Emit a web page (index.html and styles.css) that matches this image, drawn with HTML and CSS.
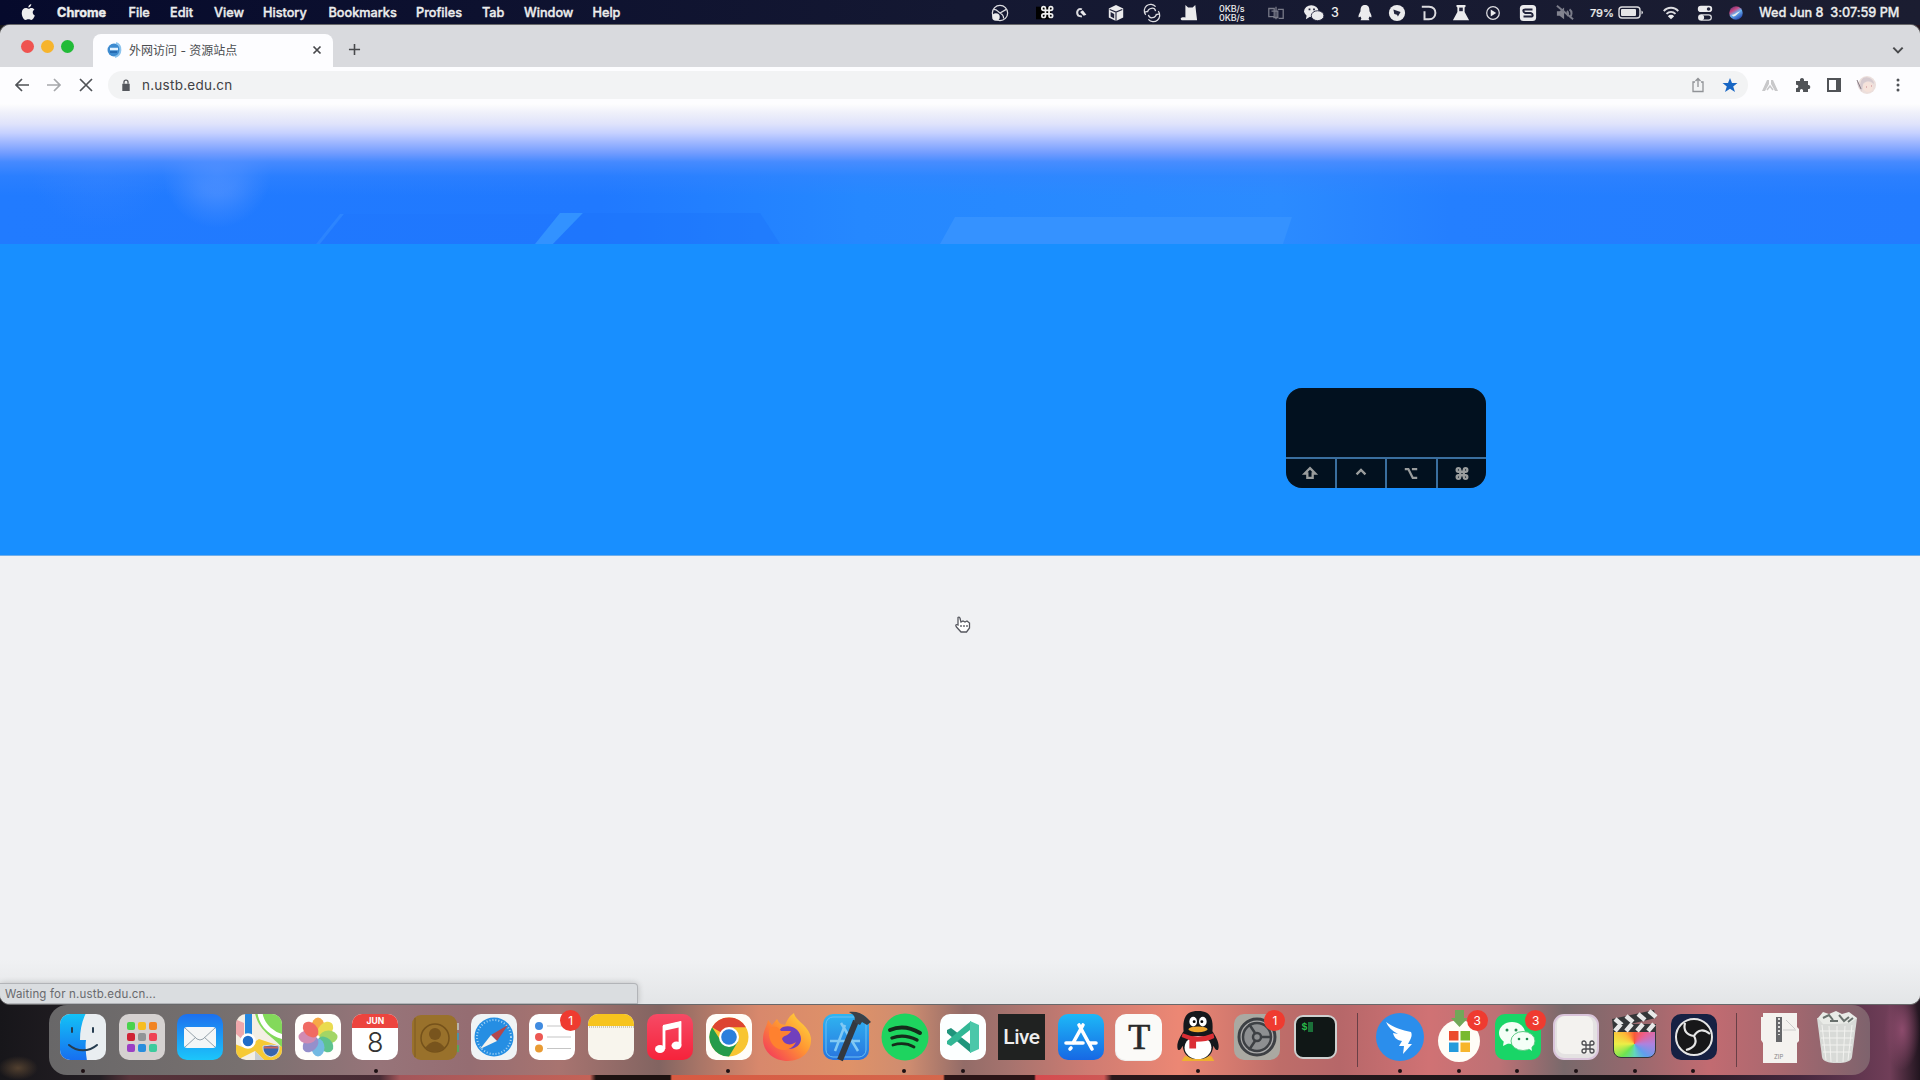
FILE: index.html
```html
<!DOCTYPE html>
<html lang="en">
<head>
<meta charset="utf-8">
<title>外网访问 - 资源站点</title>
<link rel="stylesheet" href="styles.css">
</head>
<body>
<div class="desktop">
  <header class="menubar">
    <nav class="menus">
      <svg class="apple" viewBox="0 0 16 18"><path d="M11 0c.1 2-1.500 3.700-3.200 3.700C7.600 2 9.200.3 11 0zM8 5c.8 0 1.600-.8 3-.8 1.500 0 2.600.7 3.300 1.700-2.600 1.600-2.200 5.200.5 6.300C14 14.500 12.500 17 11 17c-1.200 0-1.600-.7-3-.7s-1.900.7-3 .7C3 17 .8 13 .8 9.500.8 6 3 4.300 5 4.300 6.300 4.300 7.200 5 8 5z"/></svg>
      <b>Chrome</b><span>File</span><span>Edit</span><span>View</span><span>History</span><span>Bookmarks</span><span>Profiles</span><span>Tab</span><span>Window</span><span>Help</span>
    </nav>
    <div class="status">
      <svg class="mi" viewBox="0 0 20 20"><g class="ln"><circle cx="10" cy="10" r="8.500"/><path d="M3 6c4 0 5 3 7 4l7-4M10 10c2 1 4 3 4 6"/></g><circle cx="5.500" cy="14.500" r="4.200"/></svg>
      <svg class="mi" viewBox="0 0 20 20"><path class="black" d="M0 3h17v14H0z"/><path class="cmd" transform="translate(3.500 1)" d="M7 6V4a2 2 0 1 0-2 2h8a2 2 0 1 0-2-2v8a2 2 0 1 0 2-2H5a2 2 0 1 0 2 2z"/></svg>
      <svg class="mi" viewBox="0 0 20 20"><path class="thick" d="M11 6C7 4 4 9 7 13l4 1"/><path d="M9 9l3-2 4 5-3 1-2-2z"/></svg>
      <svg class="mi" viewBox="0 0 20 20"><path d="M10 1l8 4v10l-8 4-8-4V5z"/><path class="navyln" d="M3 6l7 3 7-3M10 9v10"/><path class="navy" d="M4 9l4 2v5l-4-2z"/></svg>
      <svg class="mi" viewBox="0 0 20 20"><path class="ln" d="M3 12A7 7 0 0 1 14 3M17 8A7 7 0 0 1 6 17M5 9c1-5 8-6 9-1M15 11c-1 5-8 6-9 1M14 12l4-1M6 8L2 9"/></svg>
      <svg class="mi" viewBox="0 0 20 20"><path d="M6 1l3 3h5l3-3 1 9 1 8H2c-3-2 0-4 4-3z"/></svg>
      <span class="net">0KB/s<br>0KB/s</span>
      <svg class="mi dim" viewBox="0 0 20 20"><path class="ln" d="M2 5h6v9H2zM12 6h6v10h-5M5 8h7v7H7M10 3v14"/></svg>
      <svg class="mi wide" viewBox="0 0 22 20"><ellipse cx="8" cy="8" rx="8" ry="6.500"/><path d="M3 12l-1 5 5-3z"/><ellipse class="navyedge" cx="15" cy="13" rx="7" ry="5.500"/><path class="navy" d="M5 5h2v2H5zM10 5h2v2h-2z"/></svg>
      <span>3</span>
      <svg class="mi" viewBox="0 0 20 20"><path d="M10 1c4 0 5 3 5 7 1 2 3 5 2 7l-2-1-1 2 1 2H5l1-2-1-2-2 1c-1-2 1-5 2-7 0-4 1-7 5-7z"/></svg>
      <svg class="mi" viewBox="0 0 20 20"><circle cx="10" cy="10" r="9"/><path class="navy" d="M6 6l8 3-3 5-1-2-3-1z"/></svg>
      <svg class="mi" viewBox="0 0 20 20"><path class="thick" d="M2 3h8c10 0 9 14 0 14H5V8"/></svg>
      <svg class="mi" viewBox="0 0 20 20"><path d="M5 1h10v2l-1 1v5l5 9H1l5-9V4L5 3z"/><path class="navy" d="M8 4h4v4H8z"/></svg>
      <svg class="mi" viewBox="0 0 20 20"><circle class="ln" cx="10" cy="10" r="7"/><path d="M7.500 6l6 4-6 4z"/></svg>
      <svg class="mi" viewBox="0 0 20 20"><rect x="1" y="1" width="18" height="18" rx="4"/><path class="navyln2" d="M15 6H7c-3 0-3 3 0 4h6c3 1 3 4 0 4H5"/></svg>
      <svg class="mi dim" viewBox="0 0 20 20"><path d="M1 8h3l5-4v13l-5-4H1z"/><path class="thick" d="M1 2l18 15M12 8c2 1 2 4 0 5M15 6c3 2 3 7 0 9"/></svg>
      <span class="pct">79%</span>
      <svg class="batt" viewBox="0 0 26 14"><rect class="ln" x="1" y="1" width="21" height="11" rx="3"/><rect x="3" y="3" width="15" height="7" rx="1"/><path d="M23.500 4.500c2 1 2 3 0 4z"/></svg>
      <svg class="mi" viewBox="0 0 20 20"><path class="thick" d="M2 8c4-5 12-5 16 0M5 11c3-3 7-3 10 0"/><path d="M6.500 13.500c2-2 5-2 7 0L10 17z"/></svg>
      <svg class="mi" viewBox="0 0 20 20"><rect x="2" y="2" width="16" height="7" rx="3.500"/><circle class="navy" cx="14" cy="5.500" r="2"/><rect class="ln" x="3" y="12" width="14" height="6" rx="3"/><circle cx="6" cy="15" r="3"/></svg>
      <svg class="mi" viewBox="0 0 20 20"><defs><linearGradient id="siri" x2=".6" y2="1"><stop stop-color="#3c2a78"/><stop offset=".35" stop-color="#c8467f"/><stop offset=".6" stop-color="#6cb4f2"/><stop offset="1" stop-color="#284eb6"/></linearGradient></defs><circle cx="10" cy="10" r="7.500" fill="url(#siri)"/><path d="M5 12c4 0 5-3 10-4-3 2-4 5-8 6z"/></svg>
      <span class="date">Wed Jun 8&nbsp; 3:07:59 PM</span>
    </div>
  </header>

  <main class="window">
    <div class="tabstrip">
      <div class="lights"><i class="red"></i><i class="yellow"></i><i class="green"></i></div>
      <div class="tab">
        <svg class="favicon" viewBox="0 0 16 16"><circle cx="8" cy="8" r="6.500" fill="#3d8bd0"/><path d="M4 7h8" stroke="#e4f3ff" stroke-width="2.500"/><path d="M4 10h7" stroke="#1c5fa8" stroke-width="1.500"/><path d="M10 1c6 2 6 12-1 14" fill="none" stroke="#8cc4ee" stroke-width="2"/></svg>
        <span class="tabtitle">外网访问 - 资源站点</span>
        <svg class="x" viewBox="0 0 10 10"><path d="M1.500 1.500l7 7M8.500 1.500l-7 7"/></svg>
      </div>
      <svg class="plus" viewBox="0 0 14 14"><path d="M7 1v12M1 7h12"/></svg>
      <svg class="chev" viewBox="0 0 12 12"><path d="M2 4l4 4 4-4"/></svg>
    </div>
    <div class="toolbar">
      <div class="nav">
        <svg viewBox="0 0 16 16"><path d="M15 8H2M8 2L2 8l6 6"/></svg>
        <svg class="off" viewBox="0 0 16 16"><path d="M1 8h13M8 2l6 6-6 6"/></svg>
        <svg viewBox="0 0 16 16"><path d="M2 2l12 12M14 2L2 14"/></svg>
      </div>
      <div class="omnibox">
        <svg class="lock" viewBox="0 0 10 14"><path d="M1 5h8v8H1z"/><path class="shackle" d="M2.800 5V3.500a2.200 2.200 0 0 1 4.400 0V5"/></svg>
        <span class="url">n.ustb.edu.cn</span>
        <svg class="share" viewBox="0 0 16 16"><path d="M5 5H3v9.500h10V5h-2M8 10V1.500M5.500 4L8 1.500 10.500 4"/></svg>
        <svg class="star" viewBox="0 0 16 16"><path d="M8 1l2 5h5.500l-4.300 3.500L13 15l-5-3.300L3 15l1.800-5.500L.5 6H6z"/></svg>
      </div>
      <div class="tools">
        <svg viewBox="0 0 16 16"><path d="M0 14L5 3h2v4L3 14zM16 14L11 3H9v4l4 7z" fill="#c8c8ca"/><path d="M5 13l3-4 3 4" fill="none" stroke="#c8c8ca" stroke-width="1.500"/></svg>
        <svg viewBox="0 0 16 16"><path d="M2 4h4c-1-4 5-4 4 0h4v4c3-1 3 5 0 4v3H9c1-4-4-4-3 0H2v-4c3 1 3-4 0-3z" fill="#505357"/></svg>
        <svg viewBox="0 0 16 16"><path d="M2 2h12v12H2z" fill="none" stroke="#505357" stroke-width="2"/><path d="M10 2h4v12h-4z" fill="#505357"/></svg>
        <svg class="avatar" viewBox="0 0 20 20"><circle cx="11" cy="10" r="9" fill="#ecdfdc"/><path d="M5 6c3-7 13-3 13 3-5-4-8-3-11 0l-1 7C2 13 1 9 1 6l3 4z" fill="#d6cacf"/><circle cx="12" cy="12" r="5" fill="#f5e2da"/><path d="M1 5l4 9" stroke="#877b83"/><path d="M10 12h1M15 11h1" stroke="#c9848e"/></svg>
        <svg viewBox="0 0 16 16"><g fill="#505357"><circle cx="8" cy="3" r="1.500"/><circle cx="8" cy="8" r="1.500"/><circle cx="8" cy="13" r="1.500"/></g></svg>
      </div>
    </div>
    <section class="page">
      <div class="hero">
        <svg class="shapes" viewBox="0 0 1920 32" preserveAspectRatio="none">
          <path d="M344 2h216l-24 30H316z" fill="#1c73fa" opacity=".2"/>
          <path d="M344 2l-24 30h-4l24-30z" fill="#3f96ff" opacity=".4"/>
          <path d="M560 1h23l-30 31h-18z" fill="#3292ff"/>
          <path d="M583 1h177l20 31H553z" fill="#1b74fb" opacity=".4"/>
          <path d="M955 5h337l-9 27H940z" fill="#3592ff"/>
        </svg>
      </div>
      <div class="banner"></div>
      <div class="blank"></div>
    </section>
    <div class="bubble">Waiting for n.ustb.edu.cn...</div>
  </main>

  <footer class="dockarea">
    <div class="dock">
      <div class="app run"><svg viewBox="0 0 48 48"><defs><linearGradient id="fb" x2="0" y2="1"><stop stop-color="#13c4f6"/><stop offset="1" stop-color="#176df0"/></linearGradient><clipPath id="tile"><rect x="1" y="1" width="46" height="46" rx="10"/></clipPath></defs><g clip-path="url(#tile)"><path fill="#e9eef1" d="M0 0h48v48H0z"/><path fill="url(#fb)" d="M0 0h27c-4 8-6 17-6 27h6c-1 7 0 14 1 21H0z"/></g><path d="M13 15v4M34 15v4M10 32c8 7 20 7 28 0" class="dk"/></svg></div>
      <div class="app"><svg viewBox="0 0 48 48"><rect x="1" y="1" width="46" height="46" rx="10" fill="#d5d1d0"/><rect x="9" y="9" width="8" height="8" rx="2" fill="#49d24d"/><rect x="20" y="9" width="8" height="8" rx="2" fill="#f7bd20"/><rect x="31" y="9" width="8" height="8" rx="2" fill="#f28321"/><rect x="9" y="20" width="8" height="8" rx="2" fill="#cf2335"/><rect x="20" y="20" width="8" height="8" rx="2" fill="#919597"/><rect x="31" y="20" width="8" height="8" rx="2" fill="#ef4254"/><rect x="9" y="31" width="8" height="8" rx="2" fill="#9b3fc4"/><rect x="20" y="31" width="8" height="8" rx="2" fill="#288ddd"/><rect x="31" y="31" width="8" height="8" rx="2" fill="#3ccb9d"/></svg></div>
      <div class="app"><svg viewBox="0 0 48 48"><defs><linearGradient id="ml" x2="0" y2="1"><stop stop-color="#1c70ef"/><stop offset="1" stop-color="#1cc6fa"/></linearGradient></defs><rect x="1" y="1" width="46" height="46" rx="10" fill="url(#ml)"/><rect x="8" y="14" width="32" height="21" rx="3" fill="#f4f6f7"/><path d="M9 15l12 11q3 2 6 0l12-11M9 34l11-10M39 34L28 24" fill="none" stroke="#95a3ac"/></svg></div>
      <div class="app"><svg viewBox="0 0 48 48"><g clip-path="url(#tile)"><path fill="#f4efe4" d="M0 0h48v48H0z"/><path fill="#83d95b" d="M20 0h28v36C40 24 24 20 20 0z"/><path d="M25 0c2 14 14 22 24 24" stroke="#fff" stroke-width="5" fill="none"/><path fill="#efa7aa" d="M0 6l9 4v18L0 20z"/><path fill="#f6ca35" d="M0 31l10 4 14-9 24 8v14H30L20 38 0 48z"/><path fill="#c8cdd1" d="M20 38l10 10H20z"/><path d="M13.500 0v26" stroke="#2487df" stroke-width="7"/></g><circle cx="13" cy="28" r="6.500" fill="#206cc8" stroke="#fff" stroke-width="2.500"/><path d="M28 33q8-2 16 0 1 9-8 11-9-2-8-11z" fill="#3865ac" stroke="#d4e0f0"/><path d="M29 34.500h14" stroke="#c8655f" stroke-width="2"/></svg></div>
      <div class="app"><svg viewBox="0 0 48 48"><rect x="1" y="1" width="46" height="46" rx="10" fill="#fffefb"/><g opacity=".85"><ellipse cx="24" cy="13.500" rx="6.500" ry="9" fill="#f69b27"/><ellipse cx="24" cy="13.500" rx="6.500" ry="9" fill="#e7d631" transform="rotate(45 24 24)"/><ellipse cx="24" cy="13.500" rx="6.500" ry="9" fill="#94cf4b" transform="rotate(90 24 24)"/><ellipse cx="24" cy="13.500" rx="6.500" ry="9" fill="#43b87b" transform="rotate(135 24 24)"/><ellipse cx="24" cy="13.500" rx="6.500" ry="9" fill="#5badde" transform="rotate(180 24 24)"/><ellipse cx="24" cy="13.500" rx="6.500" ry="9" fill="#837cc3" transform="rotate(225 24 24)"/><ellipse cx="24" cy="13.500" rx="6.500" ry="9" fill="#c977a6" transform="rotate(270 24 24)"/><ellipse cx="24" cy="13.500" rx="6.500" ry="9" fill="#ee5148" transform="rotate(315 24 24)"/></g></svg></div>
      <div class="app run"><div class="cal"><b>JUN</b><span>8</span></div></div>
      <div class="app"><svg viewBox="0 0 48 48"><path d="M43 10h5v7h-5z" fill="#b8b5ad"/><path d="M43 20h5v7h-5z" fill="#4c92a7"/><path d="M43 32h5v7h-5z" fill="#5ba15a"/><rect x="1" y="2" width="45" height="45" rx="9" fill="#99712b"/><path d="M4 5v39" stroke="#7d5b24"/><circle cx="24" cy="25" r="14" fill="none" stroke="#75521b" stroke-width="1.500"/><circle cx="24" cy="21" r="6" fill="#78541d"/><path d="M14 35q10-13 20 0-10 7-20 0z" fill="#78541d"/></svg></div>
      <div class="app"><svg viewBox="0 0 48 48"><rect x="1" y="1" width="46" height="46" rx="10" fill="#f0f3f5"/><circle cx="24" cy="24" r="19.500" fill="#258ee3"/><circle cx="24" cy="24" r="17" fill="none" stroke="#a7d4f4" stroke-width="2" stroke-dasharray="1 2"/><path d="M38 12L27 28l-6-6z" fill="#b4464b"/><path d="M10 36l11-14 6 6z" fill="#f2f2ee"/></svg></div>
      <div class="app"><svg viewBox="0 0 48 48"><rect x="1" y="1" width="46" height="46" rx="10" fill="#fff"/><circle cx="11" cy="13" r="4" fill="#408be0"/><circle cx="11" cy="24" r="4" fill="#ec5853"/><circle cx="11" cy="35.500" r="4" fill="#e99b34"/><path d="M19 13h24M19 24h24M19 35.500h24" stroke="#c5c5c5"/></svg><em>1</em></div>
      <div class="app"><svg viewBox="0 0 48 48"><g clip-path="url(#tile)"><path fill="#f8f5ed" d="M0 0h48v48H0z"/><path fill="#f7c41e" d="M0 0h48v13H0z"/><path d="M0 14h48" stroke="#aaa37f" stroke-dasharray="1 1"/></g></svg></div>
      <div class="app"><svg viewBox="0 0 48 48"><defs><linearGradient id="mu" x2="0" y2="1"><stop stop-color="#f64a65"/><stop offset="1" stop-color="#f6233b"/></linearGradient></defs><rect x="1" y="1" width="46" height="46" rx="10" fill="url(#mu)"/><path d="M18 36V14l16-4v22" fill="none" stroke="#fff" stroke-width="2.800"/><path d="M17 12l18-4v6l-18 4z" fill="#fff"/><ellipse cx="14" cy="36" rx="5" ry="4" fill="#fff"/><ellipse cx="30.500" cy="32.500" rx="5" ry="4" fill="#fff"/></svg></div>
      <div class="app run"><svg viewBox="0 0 48 48"><rect x="1" y="1" width="46" height="46" rx="10" fill="#fffdf8"/><circle cx="24" cy="24" r="19.500" fill="#f8c532"/><path d="M24 24L7.100 14.200A19.500 19.500 0 0 1 40.900 14.200H24z" fill="#dd4432"/><path d="M7.100 14.200A19.500 19.500 0 0 0 24 43.500l9-15L24 24 16 28z" fill="#269b4a"/><circle cx="24" cy="24" r="10" fill="#fff"/><circle cx="24" cy="24" r="7.800" fill="#2b7fdc"/></svg></div>
      <div class="app"><svg viewBox="0 0 48 48"><defs><linearGradient id="ff" x1="1" x2="0" y2="1"><stop stop-color="#ffe33f"/><stop offset=".45" stop-color="#ff9632"/><stop offset="1" stop-color="#f22b61"/></linearGradient></defs><path d="M5 7l4 5 5-6c2 4 3 5 8 6 3-7 5-9 9-12 1 8 15 12 17 25 1 13-9 23-23 23S0 39 0 26C0 18 4 13 5 7z" fill="url(#ff)"/><path d="M20 14c10-3 18 4 18 12S27 39 19 34s-5-9 0-12c-3-2-4-5 1-8z" fill="#7140bd"/><path d="M7 15c6-3 9 0 11 3h10c-2 5-8 4-9 8 2 6 9 7 14 3-4 9-16 11-23 3C6 27 5 20 7 15z" fill="#ff812f"/></svg></div>
      <div class="app"><svg viewBox="0 0 48 48"><defs><linearGradient id="xc" x2="0" y2="1"><stop stop-color="#2fb5f1"/><stop offset="1" stop-color="#2874df"/></linearGradient></defs><rect x="1" y="1" width="46" height="46" rx="10" fill="url(#xc)"/><rect x="4" y="4" width="40" height="40" rx="7" fill="none" stroke="#6bc0f4"/><path d="M8 28h30M13 38l10-26M19 10l17 28" stroke="#81c9f4" stroke-width="2.500" fill="none"/><path d="M34 8L18 47" stroke="#333940" stroke-width="6"/><path d="M27-1c9-1 15 2 22 10l-4 3-5-3-2 3-6-3c2-5 0-7-5-10z" fill="#3a4148"/></svg></div>
      <div class="app run"><svg viewBox="0 0 48 48"><circle cx="24" cy="24" r="23.500" fill="#1ed45f"/><g fill="none" stroke="#152b1b" stroke-linecap="round"><path d="M9 17c9-4 20-3 30 3" stroke-width="4"/><path d="M11 25c8-3 17-2 25 2" stroke-width="3.400"/><path d="M12 32c7-2 14-2 21 2" stroke-width="2.800"/></g></svg></div>
      <div class="app run"><svg viewBox="0 0 48 48"><rect x="1" y="1" width="46" height="46" rx="10" fill="#fcffff"/><path d="M8 17l4-2 20 15v10L8 20z" fill="#20957c"/><path d="M8 31l4 2 20-15V8L8 28z" fill="#31b795"/><path d="M31 8l9 4v24l-9 4z" fill="#4bc7a9"/><path d="M31 17v14l-9-7z" fill="#fff"/></svg></div>
      <div class="app"><div class="live">Live</div></div>
      <div class="app"><svg viewBox="0 0 48 48"><defs><linearGradient id="as" x2="0" y2="1"><stop stop-color="#1db8f7"/><stop offset="1" stop-color="#1768e4"/></linearGradient></defs><rect x="1" y="1" width="46" height="46" rx="10" fill="url(#as)"/><g stroke="#fff" stroke-width="3.600" stroke-linecap="round"><path d="M26 12L16 30M22 12l13 24M9 30h17M33 30h6M14 35l-1 1"/></g></svg></div>
      <div class="app"><div class="typora">T</div></div>
      <div class="app run"><svg viewBox="0 0 48 50"><path d="M10 45h28l3 5H7z" fill="#eeb030"/><path d="M24-2c14 0 16 9 15 21 4 6 8 13 6 19-2 2-4-2-5-4-1 10-7 14-16 14S9 44 8 34c-1 2-3 6-5 4-2-6 2-13 6-19C8 7 10-2 24-2z" fill="#14181c"/><ellipse cx="24" cy="36" rx="14" ry="12" fill="#fff"/><ellipse cx="19" cy="9" rx="4" ry="5" fill="#fff"/><ellipse cx="29" cy="9" rx="4" ry="5" fill="#fff"/><circle cx="20" cy="9" r="1.500"/><circle cx="28" cy="9" r="1.500"/><ellipse cx="24" cy="17" rx="10" ry="3" fill="#efa72d"/><path d="M8 21q16 7 32 0l1 5q-8 4-19 4v7h-7v-9l-8-3z" fill="#db2e35"/></svg></div>
      <div class="app"><svg viewBox="0 0 48 48"><rect x="1" y="1" width="46" height="46" rx="10" fill="#aaa9a2"/><circle cx="24" cy="24" r="18" fill="#aaa" stroke="#3d4044" stroke-width="3"/><circle cx="24" cy="24" r="14" fill="#8d8f91" stroke="#3d4044" stroke-width="2.500"/><circle cx="24" cy="24" r="4" fill="none" stroke="#3d4044" stroke-width="2.500"/><path d="M28 24h10M22 20l-6-9M22 28l-6 9" stroke="#3d4044" stroke-width="2.500"/></svg><em>1</em></div>
      <div class="app"><div class="term">$<i></i></div></div>
      <hr>
      <div class="app run"><svg viewBox="0 0 48 48"><circle cx="24" cy="24" r="24" fill="#2b8eec"/><path d="M10 9c8 6 16 8 25 10 2 4-1 8-3 12h4l-9 10 1-8h-5l3-5c-6-1-8-4-9-8l5 1c-6-3-10-7-12-12z" fill="#fff"/></svg></div>
      <div class="app run"><svg viewBox="0 0 48 48"><circle cx="24" cy="28" r="21" fill="#fffdf7"/><path d="M20-3h9v8h4L24.500 14 16 5h4z" fill="#71a858"/><path d="M14 18h9.500v9.500H14z" fill="#eb4a2c"/><path d="M25.500 18H35v9.500h-9.500z" fill="#79b92e"/><path d="M14 29.500h9.500V39H14z" fill="#239bdc"/><path d="M25.500 29.500H35V39h-9.500z" fill="#f7b52b"/></svg><em>3</em></div>
      <div class="app run"><svg viewBox="0 0 48 48"><rect x="1" y="1" width="46" height="46" rx="10" fill="#19d567"/><ellipse cx="18" cy="20" rx="13" ry="11" fill="#f4fff7"/><path d="M10 27l-1 6 8-4z" fill="#f4fff7"/><ellipse cx="29" cy="28" rx="12" ry="9.500" fill="#f4fff7" stroke="#5cca84"/><path d="M34 35l4 3-1-6z" fill="#f4fff7"/><g fill="#248c52"><circle cx="13" cy="17" r="1.500"/><circle cx="22" cy="17" r="1.500"/><circle cx="25" cy="26" r="1.300"/><circle cx="33" cy="26" r="1.300"/></g></svg><em>3</em></div>
      <div class="app run"><svg viewBox="0 0 48 48"><rect x="2" y="2" width="44" height="44" rx="10" fill="#e4e2e2" stroke="#d9c4da" stroke-width="2"/><rect x="5" y="3" width="36" height="38" rx="8" fill="#f3f2ef"/><path class="cmdkey" transform="translate(27 26)" d="M7 6V4a2 2 0 1 0-2 2h8a2 2 0 1 0-2-2v8a2 2 0 1 0 2-2H5a2 2 0 1 0 2 2z"/></svg></div>
      <div class="app run"><svg viewBox="0 0 48 48"><foreignObject x="2" y="17" width="45" height="30"><div class="wheel"></div></foreignObject><path d="M1 6L43-3l2 8-43 10z" fill="#343638"/><path d="M4 6l7 6M15 3l7 6M27 1l7 6M38-2l7 6" stroke="#e8e8e8" stroke-width="4.500"/><path d="M2 11h43v8H2z" fill="#343638"/><path d="M10 11l-6 7M21 11l-6 7M32 11l-6 7M43 11l-6 7" stroke="#e8e8e8" stroke-width="4.500"/></svg></div>
      <div class="app run"><svg viewBox="0 0 48 48"><rect x="1" y="1" width="46" height="46" rx="10" fill="#172143"/><circle cx="24" cy="24" r="18" fill="#171719" stroke="#e6e6e6" stroke-width="2"/><path d="M15 10c-2 8 2 12 9 13 4-7 10-7 16-2M24 23c4 7 0 12-8 14" fill="none" stroke="#e6e6e6" stroke-width="2.200"/></svg></div>
      <hr>
      <div class="app"><svg viewBox="0 0 48 48"><path d="M8 0h34v14l2 2v12l-2 2v20H8V30l-2-3V4h2z" fill="#f4f2ef"/><path d="M21 4h6v25h-6z" fill="#66676a"/><path d="M24 5v17" stroke="#ddd" stroke-width="2" stroke-dasharray="2 2"/><path d="M28 17h13M31 7l9 9" stroke="#ccc"/><text x="19" y="46" font-size="6" font-family="Inter, sans-serif" fill="#888">ZIP</text></svg></div>
      <div class="app"><svg viewBox="0 0 48 48"><path d="M4 5h40l-5 39q-1 6-15 6T9 44z" fill="#d8dad7"/><path d="M9 12l4 35M16 13l2 36M24 13v36M32 13l-2 36M39 12l-4 35M7 18h34M8 25h32M9 32h30M10 39h28" stroke="#f2f2ef"/><path d="M5 5l5-6 6 2 7-3 6 3 7-2 8 6-7 5-13 1L10 11z" fill="#e9ebe7"/><path d="M10 5l6-3 4 5M26 2l5 6 5-4M17 8h8M35 9l5-4" stroke="#69716d" stroke-width="2" fill="none"/></svg></div>
    </div>
  </footer>

  <div class="keys">
    <div class="keytop"></div>
    <div class="keyrow">
      <span><svg viewBox="0 0 18 16"><path d="M9 2l6 6h-3v5H6V8H3z"/></svg></span>
      <span><svg viewBox="0 0 18 16"><path d="M4 9l5-5 5 5"/></svg></span>
      <span><svg viewBox="0 0 18 16"><path d="M2 3h4l5 10h5M10 3h6"/></svg></span>
      <span><svg viewBox="0 0 18 16"><path d="M7 6V4a2 2 0 1 0-2 2h8a2 2 0 1 0-2-2v8a2 2 0 1 0 2-2H5a2 2 0 1 0 2 2z"/></svg></span>
    </div>
  </div>
  <svg class="cursor" viewBox="0 0 16 18"><path d="M3 1.500c1-1 2 0 2 1L6 6l2-1 2 1 2-1 2.500 2v5l-3 4H6l-4.500-5C0 9 1 8 3 9z"/><path d="M6 9v2M9 9v2M12 9v2"/></svg>
</div>
</body>
</html>
```
FILE: styles.css
```css
* { box-sizing: border-box; }
body { margin: 0; font-family: Inter, "Liberation Sans", "Noto Sans CJK SC", sans-serif; }
svg { display: block; overflow: visible; }
.desktop {
  position: relative;
  width: 1920px; height: 1080px;
  overflow: hidden;
  display: flex; flex-direction: column;
  background:
    radial-gradient(ellipse 18px 40px at 1902px 1030px, #8c4b6c, transparent),
    radial-gradient(ellipse 20px 12px at 18px 1068px, #52402f, transparent),
    linear-gradient(90deg, #17161a 0, #241f24 100px, #57333a 130px, #482c35 380px, #a4565a 400px, #c46257 590px, #1d1211 596px, #1d1211 670px, #d85a42 672px, #d4674c 943px, #2b1517 945px, #2b1517 1034px, #d64b4f 1036px, #ce5855 1104px, #2a181b 1112px, #1c171b 1640px, #46283e 1800px, #703e58 1890px, #21151f 100%);
}

.menubar { height: 25px; padding-top: 1px; display: flex; background: linear-gradient(90deg, #060a2c, #141832 50%, #1b1d31); color: #eceded; font-size: 12.500px; font-weight: 500; line-height: 24px; white-space: nowrap; }
.menus { width: 990px; padding-left: 20.500px; display: grid; grid-template-columns: 36.500px 71.500px 41.500px 44px 49px 65.500px 87.500px 66px 42px 68.500px 40px; font-size: 12.700px; -webkit-text-stroke: .4px; }
.menus b { font-weight: 700; }
.apple { width: 15px; height: 17px; margin-top: 3px; fill: #eee; }
.status { display: grid; align-items: center; justify-items: start; grid-template-columns: 45px 36px 35px 36px 37px 40px 47px 37px 28px 24px 32px 32px 32px 32px 35px 37px 35px 28px 43px 34px 31px 33px 151px; }
.mi { width: 20px; height: 18px; fill: #ebebed; }
.mi.wide { width: 22px; }
.batt { width: 26px; height: 14px; fill: #e5e5e7; }
.dim { opacity: .5; }
.ln, .thick { fill: none; stroke: #dcdce0; stroke-width: 1.400; }
.thick { stroke-width: 2.200; }
.cmd { fill: none; stroke: #eee; stroke-width: 1.900; }
.cmdkey { fill: none; stroke: #4c4c50; stroke-width: 1.300; }
.navy { fill: #22243c; }
.black { fill: #000; }
.navyln { fill: none; stroke: #22243c; stroke-width: 1.200; }
.navyln2 { fill: none; stroke: #22243c; stroke-width: 2.200; }
.navyedge { stroke: #22243c; }
.net { font-size: 9px; line-height: 9px; font-weight: 500; letter-spacing: -.1px; }
.pct { font-size: 11px; letter-spacing: -.1px; -webkit-text-stroke: .2px; }
.date { font-size: 12.700px; letter-spacing: -.02px; -webkit-text-stroke: .3px; }

.window { position: relative; height: 979px; display: flex; flex-direction: column; overflow: hidden; border-radius: 10px; background: #fdfdff; box-shadow: 0 0 0 1px #68686a; }
.tabstrip { height: 42px; display: flex; align-items: flex-end; background: #d9dade; }
.lights { width: 93px; height: 42px; display: flex; gap: 7px; padding: 14.500px 0 0 20.500px; }
.lights i { width: 13px; height: 13px; border-radius: 50%; }
.red { background: #ef5350; } .yellow { background: #f6b42d; } .green { background: #22bb38; }
.tab { width: 240px; height: 33px; display: flex; align-items: center; padding: 0 11px 2px 13px; border-radius: 8px 8px 0 0; background: #fdfdff; }
.favicon { width: 16px; height: 16px; }
.tabtitle { flex: 1; padding-left: 7px; font-size: 12px; color: #4b4d51; white-space: nowrap; }
.x { width: 10px; height: 10px; }
.x path, .plus path, .chev path { fill: none; stroke: #48494c; stroke-width: 1.700; }
.plus { width: 13px; height: 13px; margin: 0 0 11px 15px; }
.chev { width: 14px; height: 14px; margin: 0 15px 10px auto; }
.toolbar { flex: none; height: 37px; display: flex; align-items: center; padding-bottom: 1px; }
.nav { width: 108px; display: flex; gap: 16px; padding-left: 14px; }
.nav svg { width: 16px; height: 16px; }
.nav path { fill: none; stroke: #505357; stroke-width: 1.700; }
.nav .off { opacity: .5; }
.omnibox { width: 1640px; height: 28px; display: flex; align-items: center; padding: 0 10px 0 13px; border-radius: 14px; background: #f2f3f4; }
.lock { width: 10px; height: 13px; fill: #55575d; }
.shackle { fill: none; stroke: #55575d; stroke-width: 1.400; }
.url { flex: 1; padding-left: 11px; font-size: 13.500px; color: #3f4145; letter-spacing: .25px; }
.share { width: 16px; height: 16px; margin-right: 16px; fill: none; stroke: #909296; stroke-width: 1.300; }
.star { width: 16px; height: 16px; fill: #1766c4; }
.tools { display: flex; align-items: center; gap: 16px; padding-left: 14px; }
.tools svg { width: 16px; height: 16px; }
.tools .avatar { width: 20px; height: 20px; margin: 0 -2px; }

.page { flex: 1; display: flex; flex-direction: column; }
.hero {
  height: 140px; display: flex; flex-direction: column; justify-content: flex-end;
  background:
    linear-gradient(180deg, #fdfdfe 0, #eff0fa 9px, #dfe3fb 20px, #c6d1ff 29px, #9cb5ff 39px, #729cff 49px, #4e8dffd0 58px, #3784ff70 72px, #2b80ff00 92px),
    radial-gradient(ellipse 55px 58px at 217px 66px, #659cffb0, #659cff80 40%, #659cff30 75%, #659cff00),
    radial-gradient(ellipse 70px 60px at 100px 64px, #3f87ff60, #3f87ff00),
    linear-gradient(90deg, #217bff 0, #2079ff 600px, #2588ff 860px, #2b8bff 1280px, #247fff 1450px, #237cff 100%);
}
.shapes { width: 100%; height: 32px; }
.banner { height: 312px; background: #188fff; border-bottom: 1px solid #70aee9; }
.blank { flex: 1; background: linear-gradient(#f0f1f3 0, #f0f1f3 90%, #e3e5e7 100%); }
.bubble { position: absolute; left: 0; bottom: 0; width: 638px; height: 21px; padding-left: 5px; border: 1px solid #b2b4b8; border-left: 0; border-radius: 0 4px 0 0; background: #dadde0; box-shadow: 0 0 6px #0003; color: #68696d; font-size: 11.500px; line-height: 20px; letter-spacing: .17px; }

.dockarea { height: 76px; padding: 1px 0 0 49px; }
.dock {
  width: 1821px; height: 70px; display: flex; padding-left: 4.600px; border-radius: 18px;
  background: linear-gradient(90deg, #686768 0, #77706f 190px, #977479 330px, #956d72 420px, #a87470 510px, #826461 610px, #a87567 650px, #d8886c 710px, #df9268 800px, #ce8c70 860px, #936c68 915px, #a6736e 960px, #cf7c72 1040px, #ec8774 1130px, #be6d69 1230px, #b66769 1290px, #d07274 1380px, #bd7175 1450px, #79696b 1515px, #94686d 1580px, #c26b71 1660px, #a9686f 1730px, #7e636d 100%);
}
.dock hr { width: 1px; height: 54px; margin: 8px 12.600px; border: 0; background: #693f46; }
.app { position: relative; flex: none; width: 58.700px; padding: 8px 5.350px 0; }
.app > svg { width: 48px; height: 48px; }
.run::after { content: ""; position: absolute; left: 27px; top: 64px; width: 4px; height: 4px; border-radius: 50%; background: #1d1013; }
.app em { position: absolute; left: 37px; top: 5px; width: 21px; height: 21px; border-radius: 50%; background: #ef3b30; color: #fff; font-size: 12px; font-style: normal; line-height: 21px; text-align: center; }
.dk { fill: none; stroke: #263d50; stroke-width: 2; stroke-linecap: round; }
.cal { width: 46px; height: 46px; margin: 1px 0; display: flex; flex-direction: column; align-items: center; border-radius: 10px; overflow: hidden; background: #fff; color: #333; }
.cal b { width: 100%; height: 14px; background: #ec443e; color: #fff; font-size: 8.500px; line-height: 15px; text-align: center; }
.cal span { font-size: 27px; font-weight: 300; line-height: 30px; }
.live { width: 47px; height: 46px; margin-top: 1px; background: #202221; color: #eee; font: 500 21px/47px Roboto, sans-serif; text-align: center; letter-spacing: -.5px; }
.typora { width: 46px; height: 46px; margin: 1px; border-radius: 10px; background: #fbfaf8; box-shadow: -1px 1px 0 #eee; color: #292929; font: 36px/46px "Liberation Serif", serif; text-align: center; -webkit-text-stroke: .7px; }
.term { width: 43px; height: 44px; margin: 2px 3px; display: flex; gap: 1px; padding: 5px; border: 2px solid #ced0cf; border-radius: 9px; background: #101716; color: #29be4b; font: bold 10px/12px "Liberation Mono", monospace; }
.term i { width: 5px; height: 10px; background: #1b7139; }
.wheel { width: 43px; height: 28px; border: 1px solid #33363b; border-radius: 0 0 8px 8px; background: conic-gradient(from 0deg, #f95a38, #ed5f8e, #ad82df, #609eed, #62d6bb, #6ee451, #ecee47, #ffb937, #f95a38); }

.keys { position: absolute; left: 1286px; top: 388px; width: 200px; height: 99.500px; border-radius: 16px; overflow: hidden; display: flex; flex-direction: column; gap: 2px; background: #3a6f9f; }
.keytop { height: 69px; background: #02111f; }
.keyrow { flex: 1; display: grid; grid-template-columns: repeat(4, 1fr); gap: 2px; }
.keyrow span { display: grid; place-items: center; background: #02111f; }
.keyrow svg { width: 16px; height: 15px; fill: none; stroke: #9a9d9d; stroke-width: 2.600; }
.cursor { position: absolute; left: 955px; top: 616px; width: 16px; height: 18px; fill: #fff; stroke: #55575e; stroke-width: 1.300; }
```
